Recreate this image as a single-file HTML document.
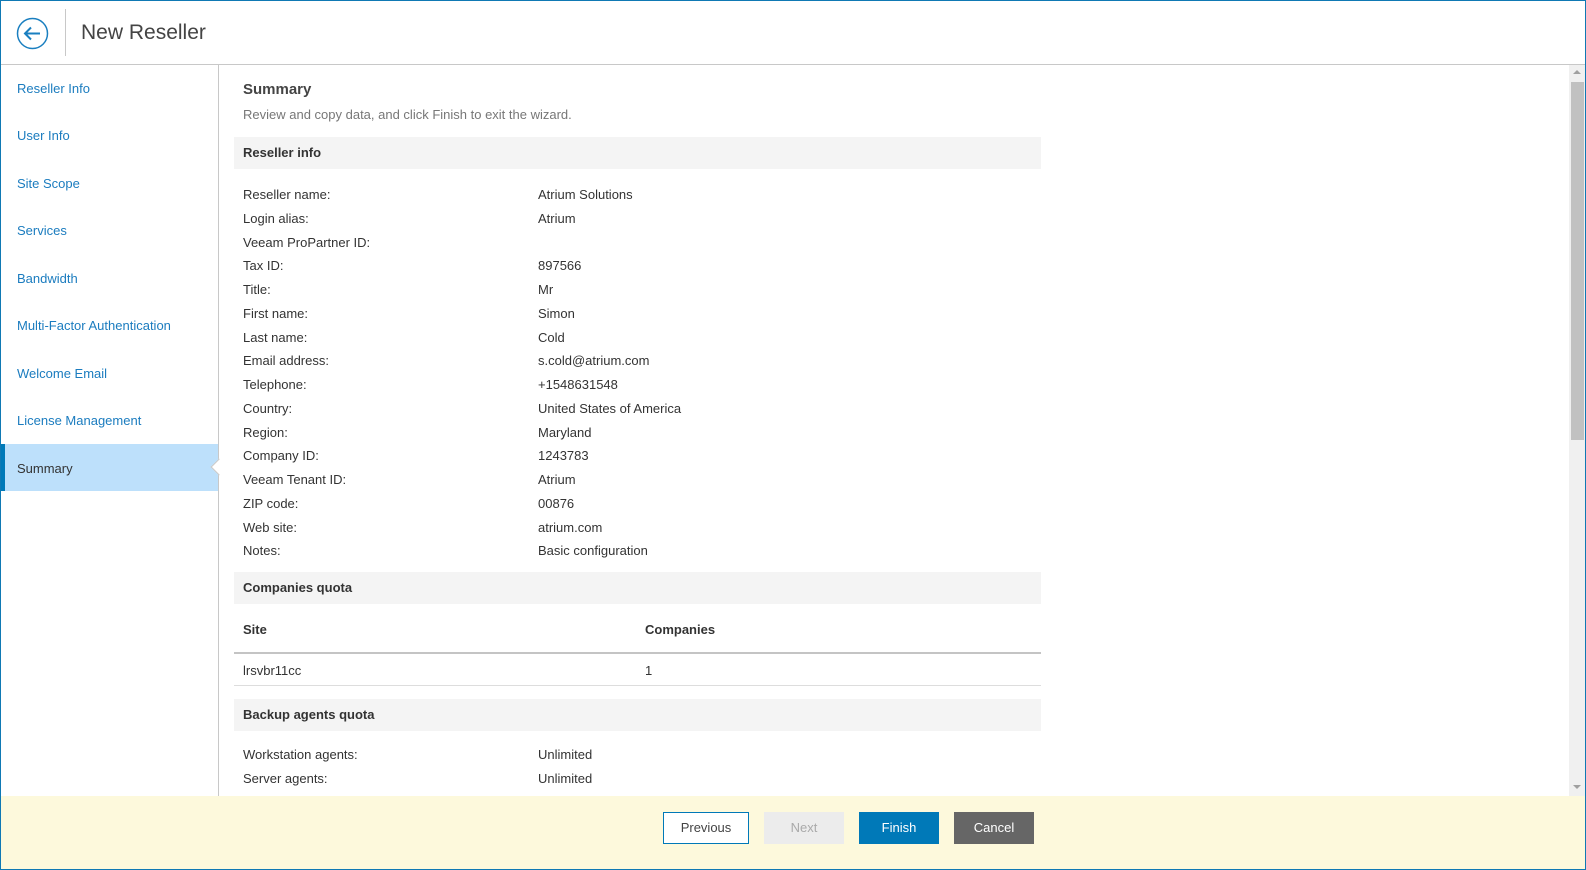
<!DOCTYPE html>
<html><head><meta charset="utf-8"><style>
*{margin:0;padding:0;box-sizing:border-box}
body{width:1586px;height:870px;position:relative;overflow:hidden;font-family:"Liberation Sans",sans-serif;font-size:13px;color:#333;background:#fff}
.frame{position:absolute;left:0;top:0;width:1586px;height:870px;border:1px solid #0f79b4;pointer-events:none;z-index:10}
.hdr{position:absolute;left:0;top:0;width:1586px;height:65px;border-bottom:1px solid #c8c8c8}
.t{position:absolute;white-space:nowrap}
.nav{position:absolute;left:17px;color:#1b7cbf;font-size:13px;white-space:nowrap}
.side{position:absolute;left:0;top:64px;width:219px;height:732px;border-right:1px solid #c8c8c8}
.sec{position:absolute;left:234px;width:807px;height:32px;background:#f4f4f4;font-weight:bold;padding-left:9px;line-height:32px}
.lbl{position:absolute;left:243px;white-space:nowrap}
.val{position:absolute;left:538px;white-space:nowrap}
.footer{position:absolute;left:0;top:796px;width:1586px;height:74px;background:#fdf9dc}
.btn{position:absolute;top:812px;width:80px;height:32px;line-height:32px;text-align:center;font-size:13px}
</style></head><body>
<div class="hdr"></div>
<svg style="position:absolute;left:16px;top:17px" width="33" height="33" viewBox="0 0 33 33"><circle cx="16.5" cy="16.5" r="15" fill="none" stroke="#1a7fc0" stroke-width="1.5"/><path d="M24 16.5H9M15 10.5L9 16.5L15 22.5" fill="none" stroke="#1a7fc0" stroke-width="2"/></svg>
<div style="position:absolute;left:65px;top:9px;width:1px;height:47px;background:#c8c8c8"></div>
<div class="t" style="left:81px;top:21px;font-size:21px;color:#444">New Reseller</div>
<div class="side"></div>
<div style="position:absolute;left:0;top:444px;width:218px;height:47px;background:#bde0fb"></div>
<div style="position:absolute;left:0;top:444px;width:5px;height:47px;background:#0079b8"></div>
<div style="position:absolute;left:213px;top:461px;width:12px;height:12px;background:#fff;transform:rotate(45deg);border-left:1px solid #c8c8c8;border-bottom:1px solid #c8c8c8"></div>
<div class="nav" style="top:81px">Reseller Info</div>
<div class="nav" style="top:128px">User Info</div>
<div class="nav" style="top:176px">Site Scope</div>
<div class="nav" style="top:223px">Services</div>
<div class="nav" style="top:271px">Bandwidth</div>
<div class="nav" style="top:318px">Multi-Factor Authentication</div>
<div class="nav" style="top:366px">Welcome Email</div>
<div class="nav" style="top:413px">License Management</div>
<div class="nav" style="top:461px;color:#333">Summary</div>
<div class="t" style="left:243px;top:81px;font-size:15px;font-weight:bold;color:#444">Summary</div>
<div class="t" style="left:243px;top:107px;color:#777">Review and copy data, and click Finish to exit the wizard.</div>
<div class="sec" style="top:137px">Reseller info</div>
<div style="position:absolute;left:0;top:183px;line-height:23.75px;width:1px">
<div class="lbl" style="top:0">Reseller name:</div><div class="val" style="top:0">Atrium Solutions</div>
<div class="lbl" style="top:23.75px">Login alias:</div><div class="val" style="top:23.75px">Atrium</div>
<div class="lbl" style="top:47.5px">Veeam ProPartner ID:</div>
<div class="lbl" style="top:71.25px">Tax ID:</div><div class="val" style="top:71.25px">897566</div>
<div class="lbl" style="top:95px">Title:</div><div class="val" style="top:95px">Mr</div>
<div class="lbl" style="top:118.75px">First name:</div><div class="val" style="top:118.75px">Simon</div>
<div class="lbl" style="top:142.5px">Last name:</div><div class="val" style="top:142.5px">Cold</div>
<div class="lbl" style="top:166.25px">Email address:</div><div class="val" style="top:166.25px">s.cold@atrium.com</div>
<div class="lbl" style="top:190px">Telephone:</div><div class="val" style="top:190px">+1548631548</div>
<div class="lbl" style="top:213.75px">Country:</div><div class="val" style="top:213.75px">United States of America</div>
<div class="lbl" style="top:237.5px">Region:</div><div class="val" style="top:237.5px">Maryland</div>
<div class="lbl" style="top:261.25px">Company ID:</div><div class="val" style="top:261.25px">1243783</div>
<div class="lbl" style="top:285px">Veeam Tenant ID:</div><div class="val" style="top:285px">Atrium</div>
<div class="lbl" style="top:308.75px">ZIP code:</div><div class="val" style="top:308.75px">00876</div>
<div class="lbl" style="top:332.5px">Web site:</div><div class="val" style="top:332.5px">atrium.com</div>
<div class="lbl" style="top:356.25px">Notes:</div><div class="val" style="top:356.25px">Basic configuration</div>
</div>
<div class="sec" style="top:572px">Companies quota</div>
<div class="t" style="left:243px;top:622px;font-weight:bold">Site</div>
<div class="t" style="left:645px;top:622px;font-weight:bold">Companies</div>
<div style="position:absolute;left:234px;top:652px;width:807px;height:2px;background:#c4c4c4"></div>
<div class="t" style="left:243px;top:663px">lrsvbr11cc</div>
<div class="t" style="left:645px;top:663px">1</div>
<div style="position:absolute;left:234px;top:685px;width:807px;height:1px;background:#ddd"></div>
<div class="sec" style="top:699px">Backup agents quota</div>
<div class="t" style="left:243px;top:747px">Workstation agents:</div><div class="t" style="left:538px;top:747px">Unlimited</div>
<div class="t" style="left:243px;top:771px">Server agents:</div><div class="t" style="left:538px;top:771px">Unlimited</div>
<div style="position:absolute;left:1569px;top:65px;width:16px;height:731px;background:#f0f0f0"></div>
<div style="position:absolute;left:1571px;top:82px;width:13px;height:358px;background:#c1c1c1"></div>
<div style="position:absolute;left:1573px;top:70px;width:0;height:0;border-left:4px solid transparent;border-right:4px solid transparent;border-bottom:4px solid #a0a0a0"></div>
<div style="position:absolute;left:1573px;top:785px;width:0;height:0;border-left:4px solid transparent;border-right:4px solid transparent;border-top:4px solid #a0a0a0"></div>
<div class="footer"></div>
<div class="btn" style="left:663px;width:86px;border:1px solid #0079b8;background:#fff;color:#444;line-height:30px">Previous</div>
<div class="btn" style="left:764px;background:#ececec;color:#aaa">Next</div>
<div class="btn" style="left:859px;background:#0079b8;color:#fff">Finish</div>
<div class="btn" style="left:954px;background:#666;color:#fff">Cancel</div>
<div class="frame"></div>
</body></html>
